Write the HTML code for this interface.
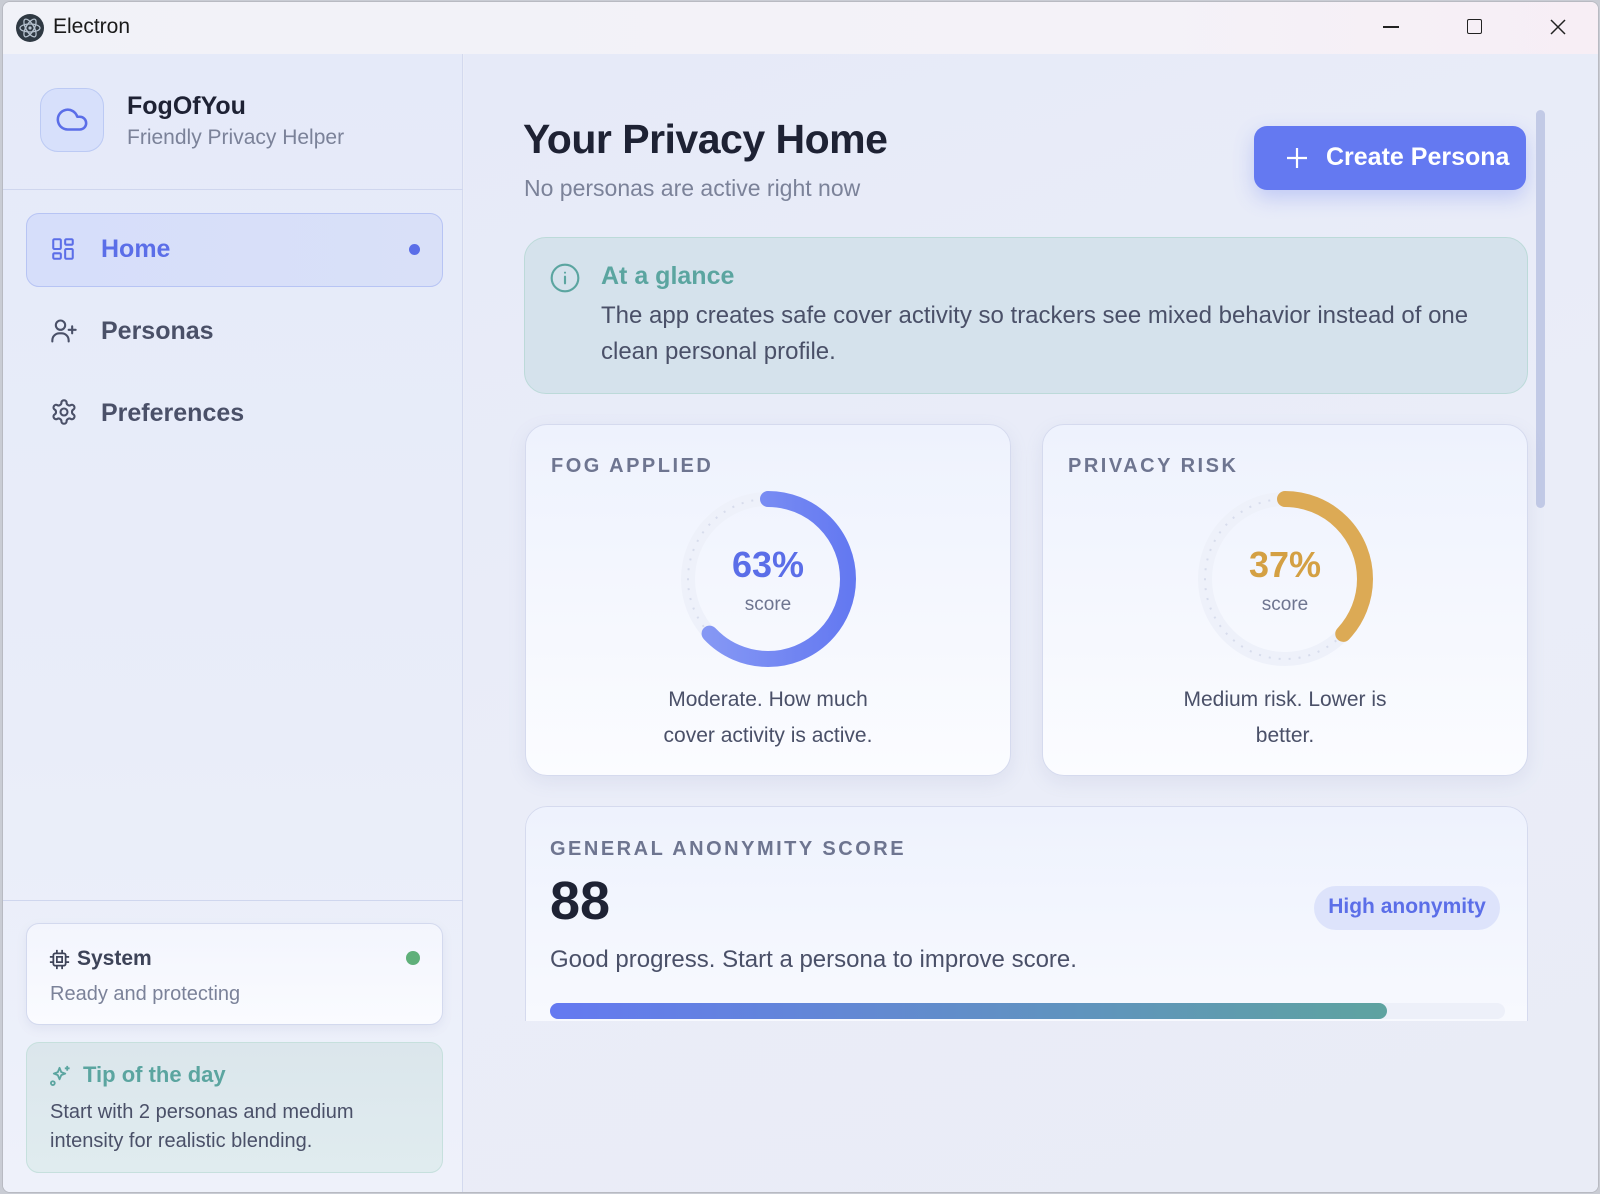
<!DOCTYPE html>
<html><head><meta charset="utf-8"><style>
*{box-sizing:border-box;margin:0;padding:0}
body{width:1600px;height:1194px;overflow:hidden;font-family:"Liberation Sans",sans-serif;background:#c9ccd4;position:relative}
.win{position:absolute;left:2px;top:1px;width:1597px;height:1192px;border-radius:8px;overflow:hidden;background:#eaedf7;border:1px solid #b8bac2}
.tb{position:absolute;left:0;top:0;width:100%;height:52px;background:linear-gradient(90deg,#f1f2f8,#f4f2f8 70%,#f7eef5)}
.abs{position:absolute}
.side{position:absolute;left:0;top:52px;width:460px;height:1140px;background:linear-gradient(180deg,#e5eaf9 0%,#e9edf9 60%,#eef1fa 100%);border-right:1px solid #d3d9ee}
.main{position:absolute;left:461px;top:52px;width:1136px;height:1140px;background:linear-gradient(160deg,#e6eaf8,#eaedf8 50%,#e9ecf6)}
.card{position:absolute;border-radius:22px;background:linear-gradient(180deg,#eef2fd,#fbfcff);border:1px solid #d5daee;box-shadow:0 6px 18px rgba(120,130,180,.12)}
.lbl{position:absolute;font-size:20px;letter-spacing:2.5px;color:#6e7590;font-weight:600}
</style></head><body>
<div class="win">
<div class="tb">
 <svg class="abs" style="left:12px;top:11px" width="30" height="30" viewBox="0 0 30 30"><circle cx="15" cy="15" r="14" fill="#2f3943"/><g fill="none" stroke="#b6c2cf" stroke-width="1.3"><ellipse cx="15" cy="15" rx="10" ry="4" transform="rotate(60 15 15)"/><ellipse cx="15" cy="15" rx="10" ry="4" transform="rotate(-60 15 15)"/><ellipse cx="15" cy="15" rx="10" ry="4"/></g><circle cx="15" cy="15" r="1.6" fill="#b6c2cf"/></svg>
 <div class="abs" style="left:50px;top:13px;font-size:21px;color:#1a1a1a">Electron</div>
 <div class="abs" style="left:1380px;top:24px;width:16px;height:1.5px;background:#222"></div>
 <div class="abs" style="left:1464px;top:17px;width:15px;height:15px;border:1.5px solid #222;border-radius:2px"></div>
 <svg class="abs" style="left:1546px;top:16px" width="18" height="18" viewBox="0 0 18 18"><path d="M2 2L16 16M16 2L2 16" stroke="#222" stroke-width="1.5"/></svg>
</div>
<div class="side">
 <div class="abs" style="left:37px;top:34px;width:64px;height:64px;border-radius:18px;background:#d7e0fb;border:1.5px solid #bccaf4"></div>
 <svg class="abs" style="left:52px;top:50px" width="34" height="34" viewBox="0 0 24 24"><path d="M17.5 19H9a7 7 0 1 1 6.71-9h1.790a4.5 4.5 0 1 1 0 9Z" fill="none" stroke="#5b6ee8" stroke-width="1.8" stroke-linecap="round" stroke-linejoin="round" transform="translate(0,-1)"/></svg>
 <div class="abs" style="left:124px;top:38px;font-size:25px;font-weight:700;color:#1e2234">FogOfYou</div>
 <div class="abs" style="left:124px;top:72px;font-size:21px;color:#7b8299">Friendly Privacy Helper</div>
 <div class="abs" style="left:0;top:135px;width:460px;height:1px;background:#cfd6ee"></div>
 <div class="abs" style="left:23px;top:159px;width:417px;height:74px;border-radius:13px;background:linear-gradient(90deg,#d6defa,#d9e0f8);border:1.5px solid #b7c4f4"></div>
 <svg class="abs" style="left:47px;top:182px" width="26" height="26" viewBox="0 0 24 24" fill="none" stroke="#5b6ee8" stroke-width="1.9"><rect x="3" y="3" width="7" height="9" rx="1"/><rect x="14" y="3" width="7" height="5" rx="1"/><rect x="14" y="12" width="7" height="9" rx="1"/><rect x="3" y="16" width="7" height="5" rx="1"/></svg>
 <div class="abs" style="left:98px;top:181px;font-size:25px;font-weight:600;color:#5b6ee8">Home</div>
 <div class="abs" style="left:406px;top:190px;width:11px;height:11px;border-radius:50%;background:#5b6ee8"></div>
 <svg class="abs" style="left:47px;top:263px" width="28" height="28" viewBox="0 0 24 24" fill="none" stroke="#4a5068" stroke-width="1.8" stroke-linecap="round"><circle cx="9" cy="7" r="4"/><path d="M2 21v-1a6 6 0 0 1 6-6h2a6 6 0 0 1 6 6v1M19 8v6M16 11h6"/></svg>
 <div class="abs" style="left:98px;top:263px;font-size:25px;font-weight:600;color:#4a5068">Personas</div>
 <svg class="abs" style="left:47px;top:344px" width="28" height="28" viewBox="0 0 24 24" fill="none" stroke="#4a5068" stroke-width="1.8" stroke-linejoin="round"><path d="M12.22 2h-.44a2 2 0 0 0-2 2v.18a2 2 0 0 1-1 1.730l-.43.25a2 2 0 0 1-2 0l-.15-.08a2 2 0 0 0-2.73.73l-.22.38a2 2 0 0 0 .73 2.73l.15.1a2 2 0 0 1 1 1.72v.51a2 2 0 0 1-1 1.74l-.15.09a2 2 0 0 0-.73 2.73l.22.38a2 2 0 0 0 2.73.73l.15-.08a2 2 0 0 1 2 0l.43.25a2 2 0 0 1 1 1.73V20a2 2 0 0 0 2 2h.44a2 2 0 0 0 2-2v-.18a2 2 0 0 1 1-1.73l.43-.25a2 2 0 0 1 2 0l.15.08a2 2 0 0 0 2.73-.73l.22-.39a2 2 0 0 0-.73-2.73l-.15-.08a2 2 0 0 1-1-1.74v-.5a2 2 0 0 1 1-1.74l.15-.09a2 2 0 0 0 .73-2.73l-.22-.38a2 2 0 0 0-2.73-.73l-.15.08a2 2 0 0 1-2 0l-.43-.25a2 2 0 0 1-1-1.73V4a2 2 0 0 0-2-2z"/><circle cx="12" cy="12" r="3"/></svg>
 <div class="abs" style="left:98px;top:345px;font-size:25px;font-weight:600;color:#4a5068">Preferences</div>
 <div class="abs" style="left:0;top:846px;width:460px;height:1px;background:#cfd6ee"></div>
 <div class="abs" style="left:23px;top:869px;width:417px;height:102px;border-radius:13px;background:linear-gradient(180deg,#f3f5fd,#fafbff);border:1.5px solid #d3d9ee;box-shadow:0 4px 10px rgba(120,130,180,.1)"></div>
 <svg class="abs" style="left:46px;top:895px" width="21" height="21" viewBox="0 0 24 24" fill="none" stroke="#3d4358" stroke-width="2"><rect x="5" y="5" width="14" height="14" rx="2"/><rect x="9" y="9" width="6" height="6"/><path d="M9 1v4M15 1v4M9 19v4M15 19v4M1 9h4M1 15h4M19 9h4M19 15h4"/></svg>
 <div class="abs" style="left:74px;top:893px;font-size:21px;font-weight:600;color:#3d4358">System</div>
 <div class="abs" style="left:403px;top:897px;width:14px;height:14px;border-radius:50%;background:#5fb07a"></div>
 <div class="abs" style="left:47px;top:929px;font-size:20px;color:#7b8299">Ready and protecting</div>
 <div class="abs" style="left:23px;top:988px;width:417px;height:131px;border-radius:13px;background:linear-gradient(180deg,#dbe6ec,#e0ecef);border:1.5px solid #c6e0dd"></div>
 <svg class="abs" style="left:46px;top:1010px" width="23" height="23" viewBox="0 0 24 24" fill="none" stroke="#5ba5a0" stroke-width="1.9" stroke-linejoin="round"><path d="M11 4l1.8 4.5L17 10l-4.2 1.6L11 16l-1.8-4.4L5 10l4.2-1.5z"/><path d="M19 2v5M16.5 4.5h5"/><circle cx="4" cy="20" r="2"/></svg>
 <div class="abs" style="left:80px;top:1008px;font-size:22px;font-weight:600;color:#5ba5a0">Tip of the day</div>
 <div class="abs" style="left:47px;top:1044px;font-size:20px;line-height:29px;color:#4a5068">Start with 2 personas and medium<br>intensity for realistic blending.</div>
</div>
<div class="main">
 <div class="abs" style="left:59px;top:62px;font-size:41px;font-weight:700;color:#1e2234;letter-spacing:-.5px">Your Privacy Home</div>
 <div class="abs" style="left:60px;top:121px;font-size:23px;color:#7b8299">No personas are active right now</div>
 <div class="abs" style="left:790px;top:72px;width:272px;height:64px;border-radius:13px;background:#6479f1;box-shadow:0 8px 20px rgba(100,121,241,.3)"></div>
 <svg class="abs" style="left:822px;top:93px" width="22" height="22" viewBox="0 0 22 22"><path d="M11 1v20M1 11h20" stroke="#fff" stroke-width="2.2"/></svg>
 <div class="abs" style="left:862px;top:89px;font-size:25px;font-weight:600;color:#fff">Create Persona</div>
 <div class="abs" style="left:1072px;top:56px;width:9px;height:398px;border-radius:5px;background:#c2cae6"></div>
 <div class="abs" style="left:60px;top:183px;width:1004px;height:157px;border-radius:22px;background:#d5e2ec;border:1.5px solid #bcdad9"></div>
 <svg class="abs" style="left:85px;top:208px" width="32" height="32" viewBox="0 0 24 24" fill="none" stroke="#5ba5a0" stroke-width="1.6" stroke-linecap="round"><circle cx="12" cy="12" r="10"/><path d="M12 16v-5M12 8h.01"/></svg>
 <div class="abs" style="left:137px;top:208px;font-size:25px;font-weight:600;color:#5ba5a0">At a glance</div>
 <div class="abs" style="left:137px;top:244px;font-size:24px;line-height:36px;color:#4a5068;width:910px">The app creates safe cover activity so trackers see mixed behavior instead of one clean personal profile.</div>

 <div class="card" style="left:61px;top:370px;width:486px;height:352px"></div>
 <div class="lbl" style="left:87px;top:401px">FOG APPLIED</div>
 <svg class="abs" style="left:212px;top:433px" width="184" height="184" viewBox="0 0 184 184"><circle cx="92" cy="92" r="80" fill="none" stroke="#eef1fa" stroke-width="14"/><circle cx="92" cy="92" r="80" fill="none" stroke="#d7dcec" stroke-width="2" stroke-dasharray="2 8"/><circle cx="92" cy="92" r="80" fill="none" stroke="url(#g1)" stroke-width="16" stroke-linecap="round" stroke-dasharray="316.7 502.7" transform="rotate(-90 92 92)"/><defs><linearGradient id="g1" x1="0" y1="1" x2="0" y2="0"><stop offset="0" stop-color="#6479f1"/><stop offset="1" stop-color="#8a9cf5"/></linearGradient></defs></svg>
 <div class="abs" style="left:212px;top:490px;width:184px;text-align:center;font-size:36px;font-weight:700;color:#5b6ee8">63%</div>
 <div class="abs" style="left:212px;top:540px;width:184px;text-align:center;font-size:19px;color:#6e7590">score</div>
 <div class="abs" style="left:61px;top:628px;width:486px;text-align:center;font-size:21px;line-height:36px;color:#4a5068">Moderate. How much<br>cover activity is active.</div>

 <div class="card" style="left:578px;top:370px;width:486px;height:352px"></div>
 <div class="lbl" style="left:604px;top:401px">PRIVACY RISK</div>
 <svg class="abs" style="left:729px;top:433px" width="184" height="184" viewBox="0 0 184 184"><circle cx="92" cy="92" r="80" fill="none" stroke="#eef1fa" stroke-width="14"/><circle cx="92" cy="92" r="80" fill="none" stroke="#d7dcec" stroke-width="2" stroke-dasharray="2 8"/><circle cx="92" cy="92" r="80" fill="none" stroke="#dcaa55" stroke-width="16" stroke-linecap="round" stroke-dasharray="186 502.7" transform="rotate(-90 92 92)"/></svg>
 <div class="abs" style="left:729px;top:490px;width:184px;text-align:center;font-size:36px;font-weight:700;color:#d4a043">37%</div>
 <div class="abs" style="left:729px;top:540px;width:184px;text-align:center;font-size:19px;color:#6e7590">score</div>
 <div class="abs" style="left:578px;top:628px;width:486px;text-align:center;font-size:21px;line-height:36px;color:#4a5068">Medium risk. Lower is<br>better.</div>

 <div class="abs" style="left:61px;top:752px;width:1003px;height:215px;overflow:hidden;border-radius:22px 22px 0 0">
  <div class="card" style="left:0;top:0;width:1003px;height:300px;box-shadow:none"></div>
  <div class="lbl" style="left:25px;top:32px">GENERAL ANONYMITY SCORE</div>
  <div class="abs" style="left:25px;top:64px;font-size:54px;font-weight:700;color:#1e2234">88</div>
  <div class="abs" style="left:789px;top:80px;width:186px;height:44px;border-radius:22px;background:#dde3fb"></div>
  <div class="abs" style="left:789px;top:89px;width:186px;text-align:center;font-size:21px;font-weight:600;color:#5b6ee8">High anonymity</div>
  <div class="abs" style="left:25px;top:140px;font-size:24px;color:#4a5068">Good progress. Start a persona to improve score.</div>
  <div class="abs" style="left:25px;top:197px;width:955px;height:16px;border-radius:8px;background:#edf0f9"></div>
  <div class="abs" style="left:25px;top:197px;width:837px;height:16px;border-radius:8px;background:linear-gradient(90deg,#6479f1,#5ea3a0)"></div>
 </div>
</div>
</div>
</body></html>
